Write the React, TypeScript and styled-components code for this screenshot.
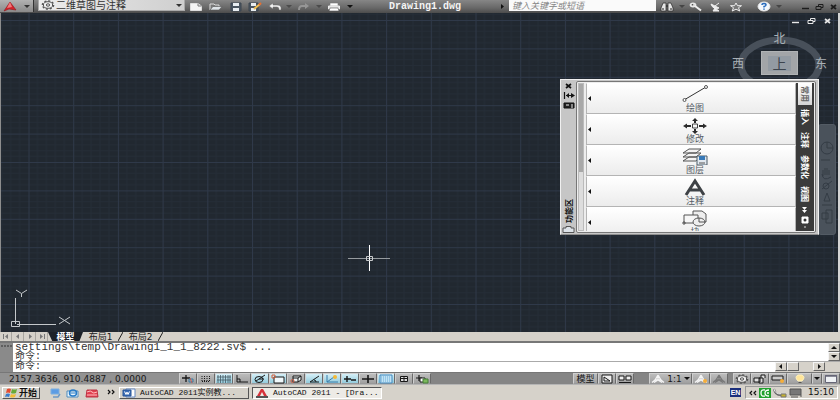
import React from "react";
import styled, { createGlobalStyle, css } from "styled-components";

const cjk = `"Noto Sans CJK SC", sans-serif`;
const mono = `"Liberation Mono", "Noto Sans CJK SC", monospace`;

const GlobalStyle = createGlobalStyle`
  * { box-sizing: border-box; }
  body { margin: 0; background: #d6d2ca; font-family: "DejaVu Sans", ${cjk}; }
  button, input, select { font: inherit; color: inherit; margin: 0; padding: 0; border: 0; background: none; border-radius: 0; outline: none; }
  svg { display: block; flex: none; }
`;

const Window = styled.div`
  display: flex;
  flex-direction: column;
  height: 100vh;
  overflow: hidden;
`;

/* ---------- title bar ---------- */
const TitleBar = styled.header`
  display: flex;
  align-items: center;
  height: 13px;
  flex: none;
  background: linear-gradient(#868686, #686868 60%, #4c4c4c);
  color: #1c1c1c;
`;
const LogoButton = styled.button`
  display: flex;
  align-items: center;
  justify-content: space-between;
  width: 34px;
  height: 12px;
  padding: 0 3px;
  margin-right: 4px;
  align-self: flex-start;
  background: linear-gradient(#b2b2b2, #8a8a8a);
  border-right: 1px solid #333;
`;
const WorkspaceBox = styled.label`
  display: flex;
  align-items: center;
  gap: 1px;
  width: 147px;
  height: 11px;
  padding: 0 2px;
  margin-right: 1px;
  align-self: flex-start;
  background: linear-gradient(90deg, #ececec, #cfcfcf);
  border: 1px solid #aaa;
  border-top: 0;
`;
const WorkspaceSelect = styled.select`
  appearance: none;
  flex: 1;
  height: 11px;
  font: 10px/10px ${cjk};
  color: #333;
`;
const Tool = styled.button<{ $w?: number }>`
  display: flex;
  align-items: center;
  justify-content: center;
  width: ${(p) => p.$w ?? 20}px;
  height: 12px;
  flex: none;
`;
const Title = styled.h1`
  flex: 1;
  margin: 0;
  text-align: center;
  font: bold 10px/12px ${mono};
  color: #f4f4f4;
`;
const Search = styled.input`
  width: 147px;
  height: 11px;
  padding: 0 3px;
  align-self: flex-start;
  background: #fafafa;
  font: italic 9px/11px ${cjk};
  &::placeholder { color: #858585; opacity: 1; }
`;

/* ---------- drawing area ---------- */
const Canvas = styled.main`
  position: relative;
  flex: 1;
  min-height: 0;
  overflow: hidden;
  background: #212830;
  border-left: 1px solid #8d8d8d;
  border-right: 2px solid #d5d5d5;
`;
const Fill = styled.svg`
  position: absolute;
  inset: 0;
  width: 100%;
  height: 100%;
`;
const Crosshair = styled.svg`
  position: absolute;
  left: 347px;
  top: 231px;
`;
const Ucs = styled.svg`
  position: absolute;
  left: 9px;
  bottom: 0;
`;
const DocControls = styled.div`
  position: absolute;
  right: 3px;
  top: 2px;
  display: flex;
`;
const DocButton = styled.button`
  display: flex;
  align-items: center;
  justify-content: center;
  width: 16px;
  height: 12px;
  color: #e8e8e8;
`;
const ViewCube = styled.div`
  position: absolute;
  right: 11px;
  top: 18px;
  width: 95px;
  height: 66px;
  color: #a9b0b5;
  font: 12px/14px ${cjk};
`;
const CubeRing = styled.svg`
  position: absolute;
  left: 4px;
  top: 4px;
`;
const CubeRow = styled.div`
  position: relative;
  display: flex;
  align-items: center;
  justify-content: space-between;
`;
const North = styled.div`
  position: relative;
  text-align: center;
  height: 20px;
  line-height: 13px;
`;
const CubeFace = styled.button`
  display: flex;
  align-items: center;
  justify-content: center;
  width: 37px;
  height: 24px;
  background: #a2a5a8;
  border: 1px solid #b0b3b5;
`;
const CubeLabel = styled.span`
  width: 23px;
  height: 15px;
  background: #939ba3;
  color: #3c444e;
  font: 14px/14px ${cjk};
`;
const NavBar = styled.nav`
  position: absolute;
  right: 2px;
  top: 111px;
  width: 18px;
  height: 111px;
  padding-top: 5px;
  border: 1px solid #535b64;
  border-radius: 3px;
  background: #4a525b;
`;

/* ---------- ribbon palette ---------- */
const Palette = styled.section`
  position: absolute;
  right: 19px;
  top: 66px;
  width: 259px;
  height: 156px;
  display: flex;
  background: #c6c6c6;
  border: 1px solid #f0f0f0;
  border-bottom-color: #8e8e8e;
`;
const PaletteTitle = styled.div`
  display: flex;
  flex-direction: column;
  align-items: center;
  width: 15px;
  color: #111;
`;
const PaletteName = styled.h2`
  margin: auto 0 2px;
  writing-mode: vertical-rl;
  text-orientation: sideways;
  transform: rotate(180deg);
  font: bold 8px/12px ${cjk};
`;
const PaletteFrame = styled.div`
  flex: 1;
  display: flex;
  margin: 1px 2px 1px 0;
  padding: 1px;
  border: 1px solid #777;
  border-radius: 2px;
  background: #ededed;
  min-width: 0;
`;
const Track = styled.div`
  width: 6px;
  margin-right: 2px;
  background: #ddd;
  border: 1px solid #bbb;
`;
const Thumb = styled.div`
  height: 60%;
  background: #a8a8a8;
`;
const PanelList = styled.div`
  flex: 1;
  overflow: hidden;
`;
const Panel = styled.button`
  display: grid;
  grid-template-columns: 8px 1fr;
  align-items: center;
  width: 100%;
  height: 31px;
  border: 1px solid #b4b4b4;
  border-top-color: #fff;
  background: linear-gradient(#fff, #ececec);
`;
const PanelBody = styled.span`
  display: flex;
  flex-direction: column;
  align-items: center;
  font: 9px/10px ${cjk};
  color: #555d66;
`;
const TabStrip = styled.div`
  display: flex;
  flex-direction: column;
  align-items: center;
  width: 18px;
  background: #3b3b3b;
  color: #fff;
`;
const RibbonTab = styled.button<{ $on?: boolean }>`
  writing-mode: vertical-rl;
  text-orientation: sideways;
  width: 14px;
  padding: 3px 0;
  margin-bottom: 1px;
  font: bold 8px/14px ${cjk};
  flex: none;
  ${(p) => p.$on && css`background: linear-gradient(#fff, #d4d4d4); color: #666;`}
`;

/* ---------- layout tabs ---------- */
const LayoutBar = styled.nav`
  display: flex;
  height: 9px;
  flex: none;
  background: #d5d1c9;
  color: #777;
`;
const Step = styled.button`
  display: flex;
  align-items: center;
  justify-content: center;
  width: 12px;
  height: 9px;
  border-right: 1px solid #a8a59f;
`;
const LayoutTab = styled.button<{ $on?: boolean }>`
  height: 9px;
  width: 35px;
  font: 9px/8px "DejaVu Sans", ${cjk};
  color: #222;
  ${(p) => p.$on && css`
    background: #1c2128;
    color: #fff;
    font-weight: bold;
    clip-path: polygon(0 0, 100% 0, 90% 100%, 12% 100%);
  `}
`;

/* ---------- command window ---------- */
const Command = styled.section`
  display: flex;
  height: 31px;
  flex: none;
  border-top: 2px solid #777;
  background: #d6d2ca;
  font: 11px/9px ${mono};
  color: #333;
`;
const Grip = styled.div`
  display: flex;
  justify-content: center;
  padding-top: 2px;
  width: 13px;
  background: #8a8a8a;
`;
const CommandMain = styled.div`
  flex: 1;
  display: flex;
  flex-direction: column;
  background: #fff;
`;
const History = styled.div`
  flex: 1;
  display: flex;
  justify-content: space-between;
  border-bottom: 1px solid #aaa;
`;
const Lines = styled.div`
  padding: 0 2px;
  white-space: pre;
`;
const Line = styled.div`
  height: 9px;
`;
const PromptText = styled.label`
  display: block;
  height: 9px;
  font-size: 10px;
  line-height: 9px;
`;
const Prompt = styled.div`
  display: flex;
  height: 10px;
  padding-left: 2px;
`;
const PromptInput = styled.input`
  flex: 1;
  height: 8px;
  margin-left: 4px;
`;
const ScrollColumn = styled.div`
  display: flex;
  flex-direction: column;
  justify-content: space-between;
  width: 12px;
`;
const ScrollRow = styled.div`
  display: flex;
  width: 65px;
  background: #d6d2ca;
`;
const ScrollButton = styled.button`
  display: flex;
  align-items: center;
  justify-content: center;
  width: 12px;
  height: 9px;
  background: #d6d2ca;
  border: 1px solid;
  border-color: #f5f5f5 #666 #666 #f5f5f5;
`;
const Spacer = styled.div<{ $w?: number }>`
  ${(p) => (p.$w ? css`width: ${p.$w}px; flex: none;` : css`flex: 1;`)}
`;

/* ---------- status bar ---------- */
const StatusBar = styled.footer`
  display: flex;
  align-items: stretch;
  height: 13px;
  flex: none;
  background: #858585;
  border-top: 1px solid #777;
  border-bottom: 1px solid #b5b5b5;
  color: #181818;
`;
const Coords = styled.output`
  width: 179px;
  padding-left: 9px;
  font: 9px/12px "DejaVu Sans", sans-serif;
  background: #929292;
`;
const StatusButton = styled.button<{ $on?: boolean; $w?: number }>`
  display: flex;
  align-items: center;
  justify-content: center;
  gap: 2px;
  width: ${(p) => p.$w ?? 18}px;
  flex: none;
  border: 1px solid;
  border-color: #cfcfcf #6a6a6a #999 #cfcfcf;
  background: ${(p) => (p.$on ? "linear-gradient(#d5eff7, #93cbdc)" : "linear-gradient(#bcbcbc, #a0a0a0)")};
  font: 9px/10px "DejaVu Sans", ${cjk};
`;

/* ---------- taskbar ---------- */
const TaskBar = styled.nav`
  display: flex;
  align-items: center;
  height: 15px;
  flex: none;
  padding: 0 2px;
  background: #d6d2ca;
  color: #111;
`;
const Start = styled.button`
  display: flex;
  align-items: center;
  gap: 1px;
  width: 38px;
  height: 12px;
  padding-left: 2px;
  margin-right: 6px;
  border: 1px solid;
  border-color: #fff #555 #555 #fff;
  font: bold 9px/9px ${cjk};
`;
const Task = styled.button<{ $on?: boolean }>`
  display: flex;
  align-items: center;
  gap: 4px;
  width: 130px;
  height: 12px;
  padding: 0 2px;
  margin-right: 3px;
  border: 1px solid;
  border-color: ${(p) => (p.$on ? "#555 #fff #fff #555" : "#fff #555 #555 #fff")};
  background: ${(p) => (p.$on ? "#edebe6" : "#d6d2ca")};
  font: 8px/10px ${mono};
  white-space: nowrap;
`;
const Language = styled.button`
  width: 11px;
  height: 9px;
  margin-right: 4px;
  background: #1b2f7c;
  color: #fff;
  font: bold 7px/9px "Liberation Sans", sans-serif;
`;
const Tray = styled.div`
  display: flex;
  align-items: center;
  gap: 2px;
  width: 93px;
  height: 13px;
  padding-left: 3px;
  border: 1px solid;
  border-color: #999 #fff #fff #999;
`;
const Clock = styled.time`
  padding-left: 3px;
  font: 9px/11px "DejaVu Sans", sans-serif;
`;

/* ---------- icons ---------- */
type DrawingProps = { w?: number; h?: number; children: React.ReactNode };
const Drawing = ({ w = 14, h = 10, children }: DrawingProps) => (
  <svg width={w} height={h} viewBox={`0 0 ${w} ${h}`} fill="none" stroke="currentColor" aria-hidden="true">{children}</svg>
);
const Arrow = ({ dir, fill = "#111" }: { dir: "up" | "down" | "left" | "right"; fill?: string }) => {
  const d = { up: "M0 4L3 1L6 4Z", down: "M0 1H6L3 4Z", left: "M4 0L1 2.5L4 5Z", right: "M2 0L5 2.5L2 5Z" }[dir];
  return <Drawing w={6} h={5}><path d={d} fill={fill} stroke="none" /></Drawing>;
};
const Gear = () => (
  <Drawing w={14} h={10}>
    <ellipse cx="7" cy="5" rx="4.6" ry="3.3" stroke="#555" fill="#eee" />
    <ellipse cx="7" cy="5" rx="5.7" ry="4.1" stroke="#555" strokeWidth="1.3" strokeDasharray="2 1.8" />
    <ellipse cx="7" cy="5" rx="1.7" ry="1.2" stroke="#555" />
  </Drawing>
);
const WindowGlyph = ({ kind }: { kind: "min" | "restore" | "close" }) => (
  <Drawing w={9} h={8}>
    {kind === "min" && <path d="M1 5.5H8" strokeWidth="1.4" />}
    {kind === "restore" && <><path d="M3.5 3V1.5H8V4.5H6" /><path d="M1 3.5H6V6.5H1Z" /></>}
    {kind === "close" && <path d="M2 2L7 6M7 2L2 6" strokeWidth="1.7" />}
  </Drawing>
);

const titleTools: { label: string; w: number; icon: React.ReactNode }[] = [
  { label: "新建", w: 20, icon: <Drawing><path d="M1.5 1.5H9L12.5 4V8.5H1.5Z" fill="#f4f4f4" stroke="#ddd" /><path d="M9 1.5V4H12.5" stroke="#777" /></Drawing> },
  { label: "打开", w: 20, icon: <Drawing><path d="M1 8V2H5L6 3H10V5" fill="#777" stroke="#ddd" /><path d="M1 8L4 4.5H13L10 8Z" fill="#dfe4e8" stroke="#555" strokeWidth=".6" /></Drawing> },
  { label: "保存", w: 19, icon: <Drawing w={12}><path d="M1 1H11V9H1Z" fill="#4a5560" stroke="#3c4650" /><path d="M3 1H9V4H3ZM3 6H9V9H3Z" fill="#e8edf0" stroke="none" /></Drawing> },
  { label: "另存为", w: 20, icon: <Drawing><path d="M1 1H10V9H1Z" fill="#4a5560" stroke="#3c4650" /><path d="M3 1H8V4H3ZM3 6H8V9H3Z" fill="#e8edf0" stroke="none" /><path d="M6 7L12 2" stroke="#f0bd50" strokeWidth="2" /><path d="M11 3L13 1" stroke="#e46f32" strokeWidth="2" /></Drawing> },
  { label: "放弃", w: 19, icon: <Drawing><path d="M5 1L1 4L5 7V5H9Q11 5 11 8H13Q14 3 9 3H5Z" fill="#f2f2f2" stroke="#666" strokeWidth=".5" /></Drawing> },
  { label: "放弃列表", w: 10, icon: <Arrow dir="down" fill="#4b4b4b" /> },
  { label: "重做", w: 20, icon: <Drawing><path d="M8 1L12 4L8 7V5H5Q3 5 3 8H1Q1 3 5 3H8Z" fill="#969696" stroke="none" /></Drawing> },
  { label: "重做列表", w: 10, icon: <Arrow dir="down" fill="#4b4b4b" /> },
  { label: "打印", w: 20, icon: <Drawing><path d="M3 1H11V4H3Z" fill="#fff" stroke="#777" strokeWidth=".6" /><path d="M1.5 4H12.5V7H1.5Z" fill="#ddd" stroke="#eee" /><path d="M3 6H11L12 9H2Z" fill="#fff" stroke="#555" strokeWidth=".6" /></Drawing> },
  { label: "自定义", w: 11, icon: <Arrow dir="down" /> },
];

const infoTools: { label: string; w: number; icon: React.ReactNode }[] = [
  { label: "搜索", w: 22, icon: <Drawing><path d="M3 1H6V9H1V6ZM8 1H11L13 6V9H8Z" fill="#e6e6e6" stroke="#333" strokeWidth=".8" /><path d="M6 4H8M3 6V8M11 6V8" stroke="#222" /></Drawing> },
  { label: "搜索选项", w: 8, icon: <Arrow dir="down" fill="#454545" /> },
  { label: "速博中心", w: 20, icon: <Drawing><ellipse cx="4" cy="3" rx="3" ry="2" fill="#ddd" stroke="#eee" /><path d="M6 4L12 8.5" stroke="#eee" strokeWidth="2" /><circle cx="3.5" cy="2.8" r=".8" fill="#444" stroke="none" /></Drawing> },
  { label: "通讯中心", w: 20, icon: <Drawing><path d="M2 2Q4 8 10 6Z" fill="#eee" stroke="#eee" /><path d="M6 4L10 1M4 9L6 6L10 9Z" stroke="#eee" fill="#eee" /></Drawing> },
  { label: "收藏夹", w: 19, icon: <Drawing><path d="M7 1L8.5 3.7H12.5L9.5 5.7L10.8 9L7 7.2L3.2 9L4.5 5.7L1.5 3.7H5.5Z" fill="#777" stroke="#eee" /></Drawing> },
];

const statusTools: { label: string; on?: boolean; icon: React.ReactNode }[] = [
  { label: "推断约束", icon: <><path d="M1 4H9M5 1V8" strokeWidth="1.3" /><path d="M8 5H12V8H8Z" stroke="#367ba5" /><path d="M9 4L11 9" stroke="#c35b52" /></> },
  { label: "捕捉", icon: <path d="M3 2V8M5.5 2V8M8 2V8M10.5 2V8M3 7.5H11" strokeDasharray="1 1" /> },
  { label: "栅格", on: true, icon: <path d="M1 1V9M3.5 1V9M6 1V9M8.5 1V9M11 1V9M13 1V9M0 3H14M0 6H14" stroke="#455862" strokeWidth=".8" /> },
  { label: "正交", icon: <path d="M2 1V8H13M2 5H5V8" /> },
  { label: "极轴", on: true, icon: <><ellipse cx="6" cy="5.5" rx="4" ry="3" /><path d="M3 7L12 1M6 5H11" /></> },
  { label: "对象捕捉", on: true, icon: <><path d="M3 3H13V9H3Z" fill="#eff8fb" /><path d="M1 1H4V4H1Z" stroke="#d15c38" /></> },
  { label: "三维对象捕捉", icon: <><path d="M4 2H12V6L9 8H4Z" fill="#edf5f7" /><path d="M9 8V4H4M9 4L12 2" /><circle cx="3.5" cy="7" r="1.5" stroke="#ca5b43" /></> },
  { label: "对象追踪", on: true, icon: <path d="M12 2L3 8H12M7 6Q9 6 9 8" /> },
  { label: "动态 UCS", on: true, icon: <><path d="M2 1V8H13M2 8L9 3" stroke="#387dab" /><circle cx="10" cy="3" r="2" fill="#f5b936" stroke="none" /></> },
  { label: "动态输入", on: true, icon: <path d="M1 5H8M4 2V8M8 6H13" strokeWidth="1.4" /> },
  { label: "线宽", icon: <path d="M1 5H13M7 1V9" strokeWidth="1.6" /> },
  { label: "透明度", on: true, icon: <><path d="M1 1H13V9H1Z" fill="#c2e3f5" stroke="#4187bd" /><path d="M2 3H12M2 5H12M2 7H12" stroke="#6aacd6" strokeDasharray="1 1" /></> },
  { label: "快捷特性", icon: <><path d="M3.5 2.5H10.5V7.5H3.5Z" fill="#ddd" /><path d="M3 4.5H11M7 2V8" /></> },
  { label: "选择循环", icon: <><path d="M1 4H7M4 1V7" strokeWidth="1.2" /><path d="M5 4H10V8H5Z" fill="#fff" /><path d="M8 5H13V9H8Z" fill="#7bb85c" stroke="#477e38" /></> },
];

const panels: { label: string; icon: React.ReactNode }[] = [
  { label: "绘图", icon: <><path d="M2 15L24 2" stroke="#333" /><circle cx="2.5" cy="15" r="1.5" fill="#fff" stroke="#555" /><circle cx="24" cy="2" r="1.5" fill="#fff" stroke="#555" /></> },
  { label: "修改", icon: <><path d="M10.5 8H15.5V12H10.5Z" stroke="#444" /><path d="M13 2L16 5H14V7H12V5H10ZM13 18L16 15H14V13H12V15H10ZM1 10L5 7.5V9H9V11H5V12.5ZM25 10L21 7.5V9H17V11H21V12.5Z" fill="#2c2c2c" stroke="none" /></> },
  { label: "图层", icon: <><path d="M1 6L7 2H19L14 6ZM1 10L7 6H19L14 10ZM1 14L7 10H19L14 14Z" fill="#f3f3f3" stroke="#555" /><path d="M15 9H25V18H15Z" fill="#e1e8ef" stroke="#4d5c69" /><path d="M17 9H23V13H17Z" fill="#3879b7" stroke="none" /><path d="M17 16H23" stroke="#555" /></> },
  { label: "注释", icon: <path d="M4 17L13 3L22 17M7 12H19" stroke="#3e4246" strokeWidth="3" /> },
  { label: "块", icon: <><path d="M11 2H20L24 5V13H11Z" fill="#eee" stroke="#555" /><path d="M2 6H16V14H2Z" fill="#f7f7f7" stroke="#555" /><ellipse cx="17" cy="13" rx="6" ry="4" fill="#eee" stroke="#555" /><path d="M1 13H3V15H1ZM17 9V13H23" stroke="#555" /></> },
];

const Acad = () => (
  <Drawing w={14} h={11}><path d="M1 10L7 1L13 9L6 8Z" fill="#d4232c" stroke="#8b151b" strokeWidth=".6" /><path d="M7 1L9 6L4 7Z" fill="#f2797b" stroke="none" /></Drawing>
);

const Scale = ({ dot, muted }: { dot?: boolean; muted?: boolean }) => (
  <Drawing><path d="M7 1L4 6L1 8.5M7 1L10 6L13 8.5M4 6H10M7 2V6L3 8.5M7 6L11 8.5" stroke={muted ? "#777" : "#f5f5f5"} strokeWidth="1.3" />{dot && <circle cx="11" cy="7" r="2" fill="#f6ae39" stroke="none" />}</Drawing>
);

export default function App() {
  return (
    <Window>
      <GlobalStyle />
      <TitleBar>
        <LogoButton aria-label="应用程序菜单"><Acad /><Arrow dir="down" fill="#333" /></LogoButton>
        <WorkspaceBox>
          <Gear />
          <WorkspaceSelect aria-label="工作空间"><option>二维草图与注释</option></WorkspaceSelect>
          <Arrow dir="down" fill="#333" />
        </WorkspaceBox>
        {titleTools.map((t) => <Tool key={t.label} $w={t.w} aria-label={t.label}>{t.icon}</Tool>)}
        <Title>Drawing1.dwg</Title>
        <Tool $w={14} aria-label="展开搜索"><Arrow dir="right" /></Tool>
        <Search aria-label="搜索帮助" placeholder="键入关键字或短语" />
        {infoTools.map((t) => <Tool key={t.label} $w={t.w} aria-label={t.label}>{t.icon}</Tool>)}
        <Spacer $w={9} />
        <Tool $w={20} aria-label="帮助">
          <Drawing w={14} h={11}><ellipse cx="7" cy="5.5" rx="6" ry="4.5" fill="#f4f8fd" stroke="#e6e6e6" /><path d="M5 4Q5 2.5 7 2.5T9 4Q9 5 7 5.5V6.5M7 7.5V8.8" stroke="#286bbd" strokeWidth="1.5" /></Drawing>
        </Tool>
        <Tool $w={10} aria-label="帮助选项"><Arrow dir="down" fill="#454545" /></Tool>
        <Spacer $w={15} />
        <Tool $w={13} aria-label="最小化"><WindowGlyph kind="min" /></Tool>
        <Tool $w={14} aria-label="还原"><WindowGlyph kind="restore" /></Tool>
        <Tool $w={14} aria-label="关闭"><WindowGlyph kind="close" /></Tool>
      </TitleBar>

      <Canvas>
        <Fill aria-hidden="true">
          <defs>
            <pattern id="grid" x="27.5" y="7" width="44.7" height="28.4" patternUnits="userSpaceOnUse">
              <path d="M8.94 0V28.4M17.88 0V28.4M26.82 0V28.4M35.76 0V28.4M0 5.68H44.7M0 11.36H44.7M0 17.04H44.7M0 22.72H44.7" stroke="#252d37" strokeWidth="1" />
              <path d="M.5 0V28.4M0 .5H44.7" stroke="#2f3949" strokeWidth="1" />
            </pattern>
          </defs>
          <rect width="100%" height="100%" fill="url(#grid)" />
        </Fill>
        <Crosshair width="43" height="28" aria-hidden="true">
          <path d="M0 14.5H42" stroke="#969b9f" />
          <path d="M21.5 1V27" stroke="#fff" />
          <path d="M18.5 12.5H24.5V16.5H18.5Z" fill="none" stroke="#c8cbcd" />
        </Crosshair>
        <Ucs width="64" height="46" fill="none" stroke="#c4c8cb" aria-hidden="true">
          <path d="M5.5 12V38M7 38.5H46M1.5 35.5H9.5V40.5H1.5Z" />
          <path d="M6 4L11.5 7.5L17 4M11.5 7.5V11M49 31L60 38M60 31L49 38" />
        </Ucs>
        <DocControls>
          {(["min", "restore", "close"] as const).map((k) => (
            <DocButton key={k} aria-label={`图形窗口 ${k}`}><WindowGlyph kind={k} /></DocButton>
          ))}
        </DocControls>
        <ViewCube>
          <CubeRing width="88" height="62" aria-hidden="true"><ellipse cx="44" cy="30" rx="39" ry="25" fill="none" stroke="#48505a" strokeWidth="7" /></CubeRing>
          <North>北</North>
          <CubeRow><span>西</span><CubeFace><CubeLabel>上</CubeLabel></CubeFace><span>东</span></CubeRow>
        </ViewCube>
        <NavBar aria-label="导航栏">
          <Drawing w={16} h={102}><g stroke="#343c45"><circle cx="8" cy="18" r="6" /><path d="M8 12V18H14M2 30H11M4 46V40M6 45V38M8 45V38M10 45V40M3 44Q4 52 12 47M3 59L13 51M5 71L8 63L11 71ZM3 75H13M3 83H9V89H3ZM7 80H13V93H7Z" /><circle cx="7" cy="56" r="3" /></g></Drawing>
        </NavBar>

        <Palette aria-label="功能区">
          <PaletteTitle>
            <Tool $w={14} aria-label="关闭功能区"><WindowGlyph kind="close" /></Tool>
            <Drawing w={12} h={24}><path d="M1.5 0V7M3 3.5H11" strokeWidth="1.2" /><path d="M6 1V6L3 3.5ZM8 1V6L12 3.5Z" fill="#111" stroke="none" /><path d="M1 11H11V16H1Z" fill="#222" /><path d="M3 13H6M8 13H10M8 15H10" stroke="#eee" /></Drawing>
            <PaletteName>功能区</PaletteName>
            <Drawing w={13} h={9}><path d="M1 7.5V3H4V1.5H9V3H12V7.5Z" fill="#dce2e8" stroke="#555" /></Drawing>
          </PaletteTitle>
          <PaletteFrame>
            <Track><Thumb /></Track>
            <PanelList>
              {panels.map((p) => (
                <Panel key={p.label}>
                  <Arrow dir="left" />
                  <PanelBody><Drawing w={26} h={18}>{p.icon}</Drawing>{p.label}</PanelBody>
                </Panel>
              ))}
            </PanelList>
            <TabStrip>
              <RibbonTab $on>常用</RibbonTab>
              <RibbonTab>插入</RibbonTab>
              <RibbonTab>注释</RibbonTab>
              <RibbonTab>参数化</RibbonTab>
              <RibbonTab>视图</RibbonTab>
              <Drawing w={12} h={24}><path d="M3 1L5.5 4L8 1ZM3 4L5.5 7L8 4Z" fill="#fff" stroke="none" /><path d="M3 11H9V17H3Z" fill="#fff" stroke="#fff" /><circle cx="6" cy="14" r="1.5" fill="#333" stroke="none" /><path d="M5 21H7" stroke="#ddd" /></Drawing>
            </TabStrip>
          </PaletteFrame>
        </Palette>
      </Canvas>

      <LayoutBar>
        <Step aria-label="第一个"><Drawing w={6} h={5}><path d="M.5 0V5" /><path d="M5 0L2 2.5L5 5Z" fill="#777" stroke="none" /></Drawing></Step>
        <Step aria-label="上一个"><Arrow dir="left" fill="#777" /></Step>
        <Step aria-label="下一个"><Arrow dir="right" fill="#777" /></Step>
        <Step aria-label="最后一个"><Drawing w={6} h={5}><path d="M5.5 0V5" /><path d="M1 0L4 2.5L1 5Z" fill="#777" stroke="none" /></Drawing></Step>
        <LayoutTab $on>模型</LayoutTab>
        <LayoutTab>布局1</LayoutTab>
        <Drawing w={5} h={9}><path d="M0 9L5 0" stroke="#222" /></Drawing>
        <LayoutTab>布局2</LayoutTab>
        <Drawing w={5} h={9}><path d="M0 9L5 0" stroke="#222" /></Drawing>
      </LayoutBar>

      <Command>
        <Grip><Drawing w={11} h={3}><path d="M0 1H11" stroke="#333" strokeDasharray="2 1" /></Drawing></Grip>
        <CommandMain>
          <History>
            <Lines>
              <Line>{"settings\\temp\\Drawing1_1_1_8222.sv$ ..."}</Line>
              <PromptText as="div">命令:</PromptText>
            </Lines>
            <ScrollColumn>
              <ScrollButton aria-label="向上滚动"><Arrow dir="up" /></ScrollButton>
              <ScrollButton aria-label="向下滚动"><Arrow dir="down" /></ScrollButton>
            </ScrollColumn>
          </History>
          <Prompt>
            <PromptText htmlFor="command">命令:</PromptText>
            <PromptInput id="command" />
            <ScrollRow>
              <ScrollButton aria-label="向左滚动"><Arrow dir="left" /></ScrollButton>
              <ScrollButton aria-label="滚动条" />
              <Spacer $w={14} />
              <ScrollButton aria-label="向右滚动"><Arrow dir="right" /></ScrollButton>
            </ScrollRow>
          </Prompt>
        </CommandMain>
      </Command>

      <StatusBar>
        <Coords>2157.3636, 910.4887 , 0.0000</Coords>
        {statusTools.map((t) => <StatusButton key={t.label} $on={t.on} aria-label={t.label}><Drawing>{t.icon}</Drawing></StatusButton>)}
        <Spacer />
        <StatusButton $w={25}>模型</StatusButton>
        <StatusButton aria-label="布局"><Drawing><path d="M2 1H12V9H2Z" fill="#eee" /><path d="M4 3L10 7H4Z" /></Drawing></StatusButton>
        <StatusButton aria-label="快速查看"><Drawing><path d="M1 2H6V6H1ZM8 2H13V6H8Z" fill="#eee" /><path d="M1 8.5H13" /></Drawing></StatusButton>
        <Spacer $w={15} />
        <StatusButton $w={43}><Scale />1:1<Arrow dir="down" /></StatusButton>
        <StatusButton aria-label="注释可见性"><Scale dot /></StatusButton>
        <StatusButton aria-label="自动添加比例"><Scale muted /></StatusButton>
        <Spacer $w={5} />
        <StatusButton aria-label="切换工作空间"><Gear /></StatusButton>
        <StatusButton aria-label="锁定"><Drawing><path d="M1 4H7V8H1ZM8 4V1H12V4M6 4H10V9H6Z" fill="#ddd" /></Drawing></StatusButton>
        <StatusButton aria-label="硬件加速"><Drawing><path d="M1 2H12V6H1Z" fill="#ccc" /><circle cx="11" cy="7" r="2" fill="#f6ae39" stroke="none" /></Drawing></StatusButton>
        <StatusButton $w={25} aria-label="隔离对象"><Drawing w={12}><path d="M4 7Q0 3 4 1H8Q12 3 8 7Z" fill="#ffe59a" stroke="#fff2bd" /><path d="M4.5 8.5H7.5" stroke="#555" /></Drawing></StatusButton>
        <StatusButton $w={10} aria-label="状态栏菜单"><Arrow dir="down" /></StatusButton>
        <StatusButton aria-label="全屏显示"><Drawing><path d="M1.5 1.5H12.5V8.5H1.5Z" fill="#eef1f4" stroke="#667" /><path d="M1 2H13" stroke="#667" strokeWidth="1.5" /></Drawing></StatusButton>
      </StatusBar>

      <TaskBar>
        <Start><Drawing w={13} h={10}><g stroke="none"><path d="M2 1Q4 0 6 1L5 5Q3 4 1 5Z" fill="#e54c31" /><path d="M7 1Q9 2 12 1L11 5Q8 6 6 5Z" fill="#68aa37" /><path d="M1 6Q3 5 5 6L4 9Q2 8 0 9Z" fill="#397bcd" /><path d="M6 6Q8 7 11 6L10 9Q7 10 5 9Z" fill="#f4bd35" /></g></Drawing>开始</Start>
        <Tool $w={18} aria-label="显示桌面"><Drawing w={12}><path d="M2 1H10V6H2Z" fill="#5c9ce4" stroke="#7cafdf" /><path d="M4 9H9L11 6" stroke="#6d99c5" strokeWidth="1.5" /></Drawing></Tool>
        <Tool $w={18} aria-label="浏览器"><Drawing><path d="M1 3H12V9H1Z" fill="#eaf5fb" stroke="#4e8bbd" /><ellipse cx="7" cy="5" rx="3.5" ry="3" stroke="#287cc8" strokeWidth="1.5" /><path d="M4 5H10" stroke="#287cc8" /></Drawing></Tool>
        <Tool $w={20} aria-label="工具箱"><Drawing><path d="M2 2H12L13 9H1Z" fill="#e23f50" stroke="#b93343" /><path d="M2 4Q6 2 7 4T12 4M2 7H12" stroke="#ffc0c0" /></Drawing></Tool>
        <Tool $w={17} aria-label="更多快捷方式"><Drawing w={8} h={8}><path d="M1 1L3 3L1 5M5 1L7 3L5 5" strokeWidth="1.2" /></Drawing></Tool>
        <Task><Drawing><path d="M4 1H13V9H4Z" fill="#fff" stroke="#6287c2" /><path d="M1 2H9V8H1Z" fill="#3d6eb6" stroke="#295496" /><path d="M2.5 3.5L4 6.5L5 4L6 6.5L7.5 3.5" stroke="#fff" /></Drawing>AutoCAD 2011实例教...</Task>
        <Task $on><Drawing><path d="M2 8L6 1H8L12 8H9L7 4L5 8Z" fill="#d7323a" stroke="none" /><path d="M1 8H13V10H1Z" fill="#555" stroke="none" /></Drawing>AutoCAD 2011 - [Dra...</Task>
        <Spacer />
        <Language>EN</Language>
        <Tray>
          <Drawing w={8} h={6}><path d="M3 1L1 3L3 5M7 1L5 3L7 5" strokeWidth="1.2" /></Drawing>
          <Drawing w={12}><path d="M0 0H12V10H0Z" fill="#20a22d" stroke="none" /><path d="M6 2Q2 1 2 5T6 8M10 2Q6 2 6 5T10 8M8 5H10" stroke="#fff" strokeWidth="1.3" /></Drawing>
          <Drawing><path d="M1 1Q2 7 8 7" stroke="#666" strokeWidth="2" /><path d="M1 1Q2 6 8 6" stroke="#eee" /><path d="M8 6H13V9H8Z" fill="#c7b22d" stroke="#777" /></Drawing>
          <Drawing><path d="M1 1H12V7H1Z" fill="#777" stroke="#555" /><path d="M2 9H9M12 9V7" stroke="#555" /></Drawing>
          <Clock dateTime="15:10">15:10</Clock>
        </Tray>
      </TaskBar>
    </Window>
  );
}
